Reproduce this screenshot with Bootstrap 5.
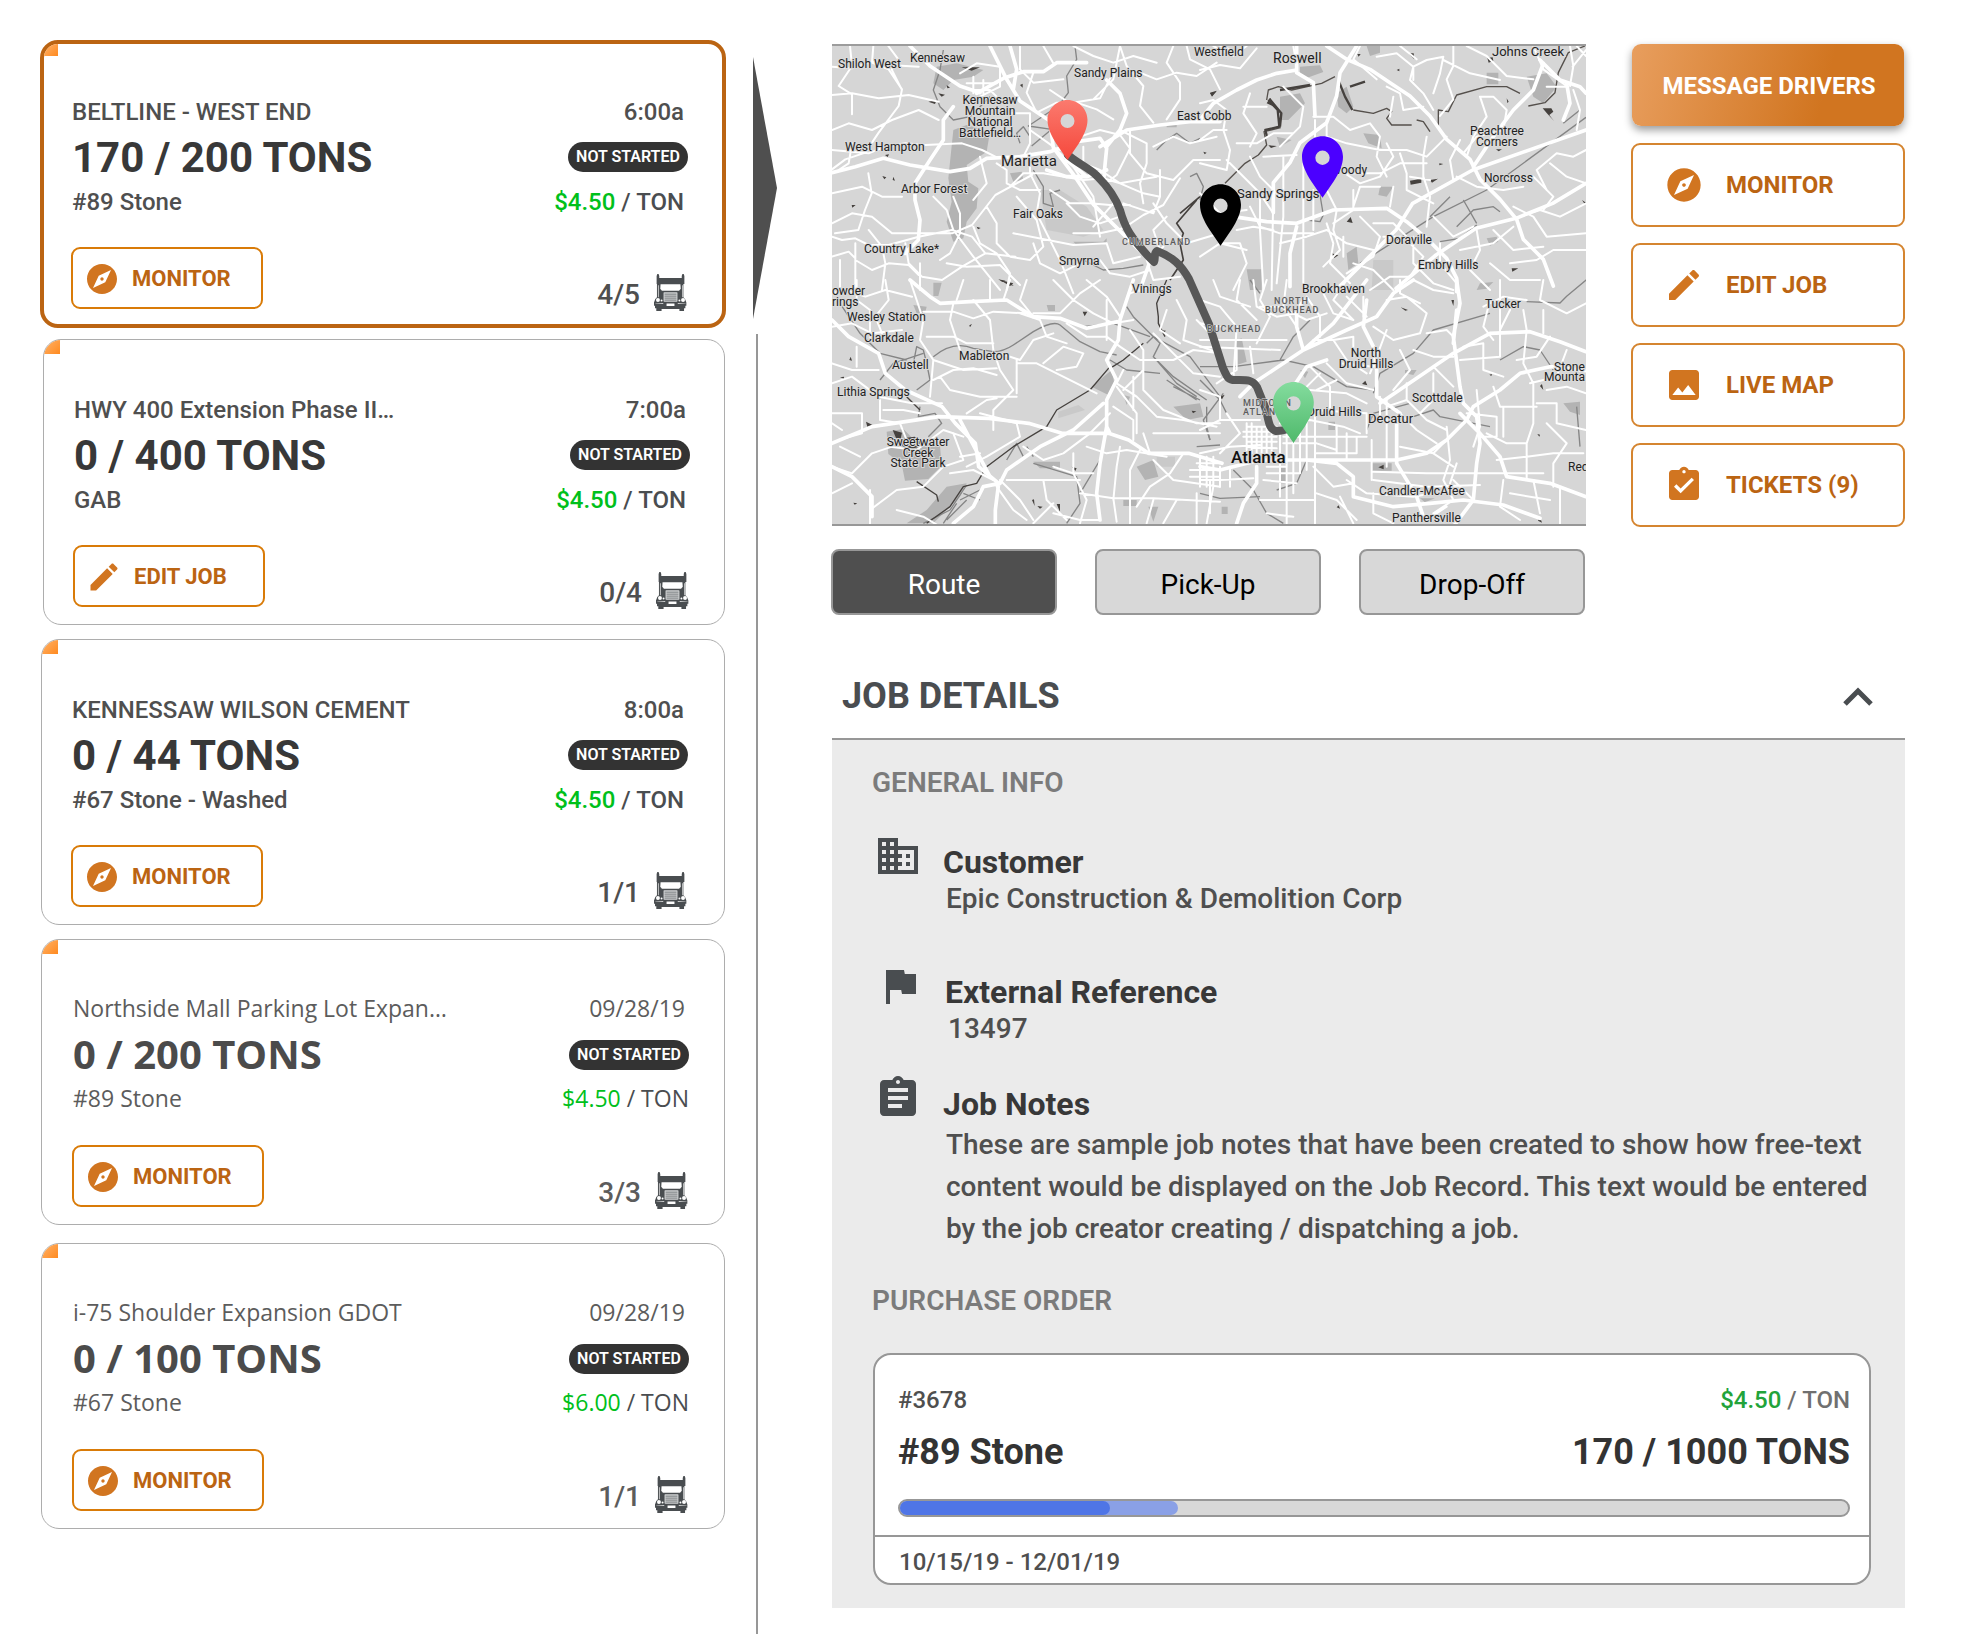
<!DOCTYPE html>
<html lang="en">
<head>
<meta charset="utf-8">
<meta name="viewport" content="width=device-width, initial-scale=1">
<title>Dispatch jobs</title>
<link href="https://cdn.jsdelivr.net/npm/bootstrap@5.3.0/dist/css/bootstrap.min.css" rel="stylesheet">
<style>
  body { font-family: Roboto, "Liberation Sans", sans-serif; font-weight: 500; color: #4f4f4f; background: #fff; }
  .page { min-height: 100vh; padding: 40px 83px 0 41px; }
  .jobs { flex: 684 1 0; min-width: 0; }
  .rail { width: 24px; margin: 17px 55px 0 28px; }
  .rail-arrow { width: 24px; height: 262px; background: #4f4f4f; clip-path: polygon(0 0, 100% 50%, 0 100%); }
  .rail-line { width: 2px; margin: 15px 0 0 3px; background: #979797; }
  .main { flex: 1073 1 0; min-width: 0; padding-top: 4px; }

  .job { position: relative; overflow: hidden; border: 1px solid #adadad; border-radius: 18px; padding: 53px 36px 10px 29px; margin-bottom: 14px; font-size: 24px; line-height: 34px; }
  .job.selected { border: 4px solid #bb6412; margin: 0 -1px 11px; padding: 51px 34px 8px 27px; }
  .job.inset { margin-left: 2px; padding-right: 34px; }
  .job.later { font-family: "Open Sans", "Noto Sans", sans-serif; font-size: 23px; color: #5c5c5c; padding: 51px 35px 10px 30px; }
  .job.later + .job.later { margin-top: 18px; }
  .job::before { content: ""; position: absolute; left: 0; top: 0; width: 16px; height: 14px; background: linear-gradient(135deg, #ffb36b, #ff8a1f); }
  .job.selected::before { width: 14px; height: 12px; }
  .job .line { padding-left: 1px; }
  .tons { font-size: 42px; line-height: 54px; padding-top: 2px; font-weight: 700; color: #383838; }
  .later .tons { font-size: 40px; color: #4b4b4b; }
  .later .state { margin-top: 4px; }
  .foot { margin-top: 28px; }
  .later .foot { margin-top: 30px; }
  .state { font-family: Roboto, sans-serif; font-size: 16px; line-height: 30px; font-weight: 600; width: 120px; text-align: center; border-radius: 15px; background: #333; color: #fff; }
  .money { color: #00c01b; }
  .unit { color: #4a4d50; }
  .act { height: 62px; width: 192px; padding: 1px 0 0 11px; gap: 12px; border: 2px solid #d97b08; border-radius: 9px; background: #fff; color: #bb6412; font-family: Roboto, sans-serif; font-size: 22px; font-weight: 700; }
  .act svg { width: 36px; height: 36px; fill: #d17520; }
  .crew { margin-top: 27px; gap: 13px; font-family: Roboto, sans-serif; font-size: 28px; line-height: 42px; }
  .crew svg { width: 35px; height: 37px; }

  .mapcol { flex: 754 1 0; min-width: 0; }
  .map { display: block; width: 100%; height: auto; border-top: 2px solid #9c9c9c; border-bottom: 2px solid #979797; }
  .side { flex: 274 1 0; margin-left: 45px; gap: 16px; }
  .side button { height: 84px; border: 2px solid #d58530; border-radius: 9px; background: #fff; color: #bb6412; font-size: 24px; font-weight: 700; padding: 0 0 0 31px; gap: 22px; }
  .side svg { width: 40px; height: 40px; fill: #d17520; }
  .side .send { height: 82px; margin: 0 1px 1px; border: 0; padding: 2px 0 0 2px; color: #fff; background: linear-gradient(105deg, #e89e5e, #d17520 70%); box-shadow: 0 4px 8px rgba(0,0,0,.4); }
  .views { margin: 23px 1px 0 -1px; gap: 38px; }
  .views button { flex: 1 1 0; height: 66px; border: 2px solid #979797; border-radius: 8px; background: #d8d8d8; color: #000; font-size: 28px; padding: 6px 0 0; }
  .views .on { background: #4f4f4f; color: #fff; }

  .sect { margin-top: 59px; padding: 0 31px 20px 10px; border-bottom: 2px solid #979797; }
  .sect h1 { font-size: 36px; line-height: 44px; font-weight: 700; color: #4a4d50; margin: 0; }
  .sect button { border: 0; background: none; padding: 2px 0 0; }
  .sect svg { display: block; width: 32px; height: 20px; }
  .panel { background: #ebebeb; padding: 25px 34px 23px 40px; }
  .panel h2 { font-size: 28px; line-height: 36px; font-weight: 600; color: #7b7b7b; margin: 0 0 31px; }
  .info { gap: 21px; padding-left: 2px; margin-bottom: 46px; }
  .info.tight { margin-bottom: 28px; padding-left: 4px; }
  .info.notes { margin-bottom: 33px; margin-right: -10px; }
  .info > svg { width: 48px; height: 48px; flex: none; fill: #494d50; }
  .info h3 { font-size: 32px; line-height: 40px; font-weight: 700; color: #383838; margin: 10px 0 0; }
  .info p { font-size: 28px; line-height: 34px; margin: 0; padding-left: 3px; }
  .info.notes p { line-height: 42px; }
  .po { border: 2px solid #979797; border-radius: 18px; background: #fff; margin: 34px 0 0 1px; font-size: 24px; line-height: 32px; }
  .po-top { padding: 29px 19px 18px 23px; }
  .po-name { font-size: 36px; line-height: 48px; margin-top: 12px; font-weight: 700; color: #333; }
  .bar { position: relative; height: 18px; margin-top: 23px; border: 2px solid #979797; border-radius: 9px; background: #d8d8d8; overflow: hidden; }
  .bar div { position: absolute; left: 0; top: 0; height: 100%; border-radius: 0 8px 8px 0; background: #8aa0e6; }
  .bar .done { background: #4f75e6; }
  .po-dates { border-top: 2px solid #979797; padding: 9px 24px 5px; }
  .po .money { color: #22a33a; }
  .po .unit { color: #707070; }
</style>
</head>
<body>
<!-- Shared icon shapes -->
<svg width="0" height="0" class="position-absolute" aria-hidden="true">
  <symbol id="i-compass" viewBox="0 0 24 24"><path d="M12 10.9c-.61 0-1.1.49-1.1 1.1s.49 1.1 1.1 1.1c.61 0 1.1-.49 1.1-1.1s-.49-1.1-1.1-1.1zM12 2C6.48 2 2 6.48 2 12s4.48 10 10 10 10-4.48 10-10S17.52 2 12 2zm2.19 12.19L6 18l3.81-8.19L18 6l-3.81 8.19z"/></symbol>
  <symbol id="i-edit" viewBox="0 0 24 24"><path d="M3 17.25V21h3.75L17.81 9.94l-3.75-3.75L3 17.25zM20.71 7.04c.39-.39.39-1.02 0-1.41l-2.34-2.34c-.39-.39-1.02-.39-1.41 0l-1.83 1.83 3.75 3.75 1.83-1.83z"/></symbol>
  <symbol id="i-image" viewBox="0 0 24 24"><path d="M21 19V5c0-1.100-.9-2-2-2H5c-1.100 0-2 .9-2 2v14c0 1.100.9 2 2 2h14c1.100 0 2-.9 2-2zM8.500 13.500l2.500 3.010L14.500 12l4.500 6H5l3.500-4.500z"/></symbol>
  <symbol id="i-task" viewBox="0 0 24 24"><path d="M19 3h-4.180C14.400 1.840 13.300 1 12 1c-1.300 0-2.400.84-2.820 2H5c-1.100 0-2 .9-2 2v14c0 1.100.9 2 2 2h14c1.100 0 2-.9 2-2V5c0-1.100-.9-2-2-2zm-7 0c.55 0 1 .45 1 1s-.45 1-1 1-1-.45-1-1 .45-1 1-1zm-2 14l-4-4 1.410-1.410L10 14.170l6.590-6.590L18 9l-8 8z"/></symbol>
  <symbol id="i-truck" viewBox="0 0 100 112">
    <path fill="#494d50" d="M8 6l2-6h4l2 6v6h68V6l2-6h4l2 6v24h-3v40l5 6 4 10v10h-3v8h-4v8H77v-6H23v6H7v-8H3v-8H0V86l4-10 5-6V30H8z"/>
    <path fill="#fff" d="M20 31h60l1 14-5 6H24l-5-6z"/>
    <path fill="#fff" d="M12 34h2v36h-2zM86 34h2v36h-2z"/>
    <rect x="29" y="55" width="42" height="29" rx="2" fill="#d3d5d6"/>
    <path stroke="#494d50" stroke-width="2" d="M32 61h36M32 67h36M32 73h36M32 79h36"/>
    <circle cx="12" cy="79" r="6" fill="#fff"/><circle cx="88" cy="79" r="6" fill="#fff"/>
    <circle cx="23" cy="80" r="3" fill="#fff"/><circle cx="77" cy="80" r="3" fill="#fff"/>
    <path fill="#fff" d="M38 89h24v8H38zM4 89l24-1v2H4zM72 88l24 1v1H72z"/>
  </symbol>
  <symbol id="i-pin" viewBox="0 0 40 60"><path fill-rule="evenodd" d="M20 0C9 0 0 9 0 20c0 8 4 16 9 24l11 16 11-16c5-8 9-16 9-24C40 9 31 0 20 0zm0 14a7 7 0 1 1 0 14a7 7 0 1 1 0-14z"/></symbol>
</svg>

<div class="page d-flex">
  <section class="jobs" aria-label="Jobs">
    <article class="job selected">
      <div class="line d-flex justify-content-between"><span>BELTLINE - WEST END</span><span class="pe-1">6:00a</span></div>
      <div class="line d-flex justify-content-between align-items-center"><span class="tons">170 / 200 TONS</span><span class="state">NOT STARTED</span></div>
      <div class="line d-flex justify-content-between"><span>#89 Stone</span><span class="unit pe-1"><span class="money">$4.50</span> / TON</span></div>
      <div class="foot d-flex justify-content-between align-items-start">
        <button type="button" class="act d-flex align-items-center"><svg><use href="#i-compass"/></svg>MONITOR</button>
        <div class="crew d-flex">4/5 <svg><use href="#i-truck"/></svg></div>
      </div>
    </article>
    <article class="job inset">
      <div class="line d-flex justify-content-between"><span>HWY 400 Extension Phase II…</span><span class="pe-1">7:00a</span></div>
      <div class="line d-flex justify-content-between align-items-center"><span class="tons">0 / 400 TONS</span><span class="state">NOT STARTED</span></div>
      <div class="line d-flex justify-content-between"><span>GAB</span><span class="unit pe-1"><span class="money">$4.50</span> / TON</span></div>
      <div class="foot d-flex justify-content-between align-items-start">
        <button type="button" class="act d-flex align-items-center"><svg><use href="#i-edit"/></svg>EDIT JOB</button>
        <div class="crew d-flex">0/4 <svg><use href="#i-truck"/></svg></div>
      </div>
    </article>
    <article class="job">
      <div class="line d-flex justify-content-between"><span>KENNESSAW WILSON CEMENT</span><span class="pe-1">8:00a</span></div>
      <div class="line d-flex justify-content-between align-items-center"><span class="tons">0 / 44 TONS</span><span class="state">NOT STARTED</span></div>
      <div class="line d-flex justify-content-between"><span>#67 Stone - Washed</span><span class="unit pe-1"><span class="money">$4.50</span> / TON</span></div>
      <div class="foot d-flex justify-content-between align-items-start">
        <button type="button" class="act d-flex align-items-center"><svg><use href="#i-compass"/></svg>MONITOR</button>
        <div class="crew d-flex">1/1 <svg><use href="#i-truck"/></svg></div>
      </div>
    </article>
    <article class="job later">
      <div class="line d-flex justify-content-between"><span>Northside Mall Parking Lot Expan…</span><span class="pe-1">09/28/19</span></div>
      <div class="line d-flex justify-content-between align-items-center"><span class="tons">0 / 200 TONS</span><span class="state">NOT STARTED</span></div>
      <div class="line d-flex justify-content-between"><span>#89 Stone</span><span class="unit"><span class="money">$4.50</span> / TON</span></div>
      <div class="foot d-flex justify-content-between align-items-start">
        <button type="button" class="act d-flex align-items-center"><svg><use href="#i-compass"/></svg>MONITOR</button>
        <div class="crew d-flex">3/3 <svg><use href="#i-truck"/></svg></div>
      </div>
    </article>
    <article class="job later">
      <div class="line d-flex justify-content-between"><span>i-75 Shoulder Expansion GDOT</span><span class="pe-1">09/28/19</span></div>
      <div class="line d-flex justify-content-between align-items-center"><span class="tons">0 / 100 TONS</span><span class="state">NOT STARTED</span></div>
      <div class="line d-flex justify-content-between"><span>#67 Stone</span><span class="unit"><span class="money">$6.00</span> / TON</span></div>
      <div class="foot d-flex justify-content-between align-items-start">
        <button type="button" class="act d-flex align-items-center"><svg><use href="#i-compass"/></svg>MONITOR</button>
        <div class="crew d-flex">1/1 <svg><use href="#i-truck"/></svg></div>
      </div>
    </article>
  </section>

  <div class="rail d-flex flex-column flex-shrink-0"><div class="rail-arrow"></div><div class="rail-line flex-grow-1"></div></div>

  <main class="main">
    <div class="d-flex align-items-start">
      <div class="mapcol">
        <svg class="map" viewBox="0 2 754 478" role="img" aria-label="Route map from Marietta to Atlanta">
          <defs>
            <linearGradient id="gRed" x1="0" y1="0" x2="0" y2="1"><stop offset="0" stop-color="#fb7a6e"/><stop offset="1" stop-color="#f5483c"/></linearGradient>
            <linearGradient id="gGreen" x1="0" y1="0" x2="0" y2="1"><stop offset="0" stop-color="#84dc9e"/><stop offset="1" stop-color="#4fb96b"/></linearGradient>
          </defs>
          <rect width="754" height="482" fill="#d6d6d6"/>

          <!-- Parks and built-up areas -->
          <g fill="#b3b3b3">
            <path transform="translate(-12 -14) scale(.33333)" d="M400 300l40-15 70 20-10 60-60 40 5 50 30 20-5 60-30 40-10 50-30 10-20-60 15-60-10-70zM570 430l35-5 5 25-30 5zM350 110l60-10 80 20-30 20-60 10-30 30-30-20zM760 635h90l10-10v15l-90 5zM1040 280h30v12h-30z"/>
            <path transform="translate(368 -14) scale(.33333)" d="M300 110l60-4 10 20-50 18-20-14zM240 200l60-10 15 30-50 50-25 0zM410 190l30-20 20 60-20 20-25-20zM860 128h35v35h-35zM980 140l60-10 30 40-40 50-30-20zM490 310l50 5 5 40-40-15zM540 470l40 0-20 30-25-5zM860 625l30-5 5 15-25 12zM440 670l30-20 5 50-30 20zM140 718h45v62h-35zM230 320l45 10-35 20zM500 48h40v20l-30 10z"/>
            <path transform="translate(-12 236) scale(.33333)" d="M200 455l50-8 30 30 80 20 5 60-40 40-70 5-10-50-40-30zM340 8h25l-10 40-15 0zM280 75l40 5-5 20-25 0zM380 620l60-10-20 40-80 80h-80l60-40zM815 320l60-50 10 50-20 25zM1060 380l80-10 10 40-50 10zM640 545h80v20h-60zM950 560l50-20 15 50-40 10zM910 660h40v18h-40zM985 680l30 0-15 45zM910 345l20 5-10 25zM680 75h25v18h-20z"/>
            <path transform="translate(368 236) scale(.33333)" d="M1090 370l50-5v40l-30-10zM515 550h60v22h-60zM240 560h22v50h-20zM385 425h20v25h-20zM615 270l35 0-10 15-25-5zM65 680h18v22h-18zM110 180l15-5 15 70-30 10zM840 10l40-4-20 20-30 4zM300 270l25 5-10 20zM660 655l45 0-30 12z"/>
          </g>
          <g fill="#c9c9c9">
            <path transform="translate(-12 -14) scale(.33333)" d="M660 480h60l80 50 50 70-60 20-110-20z"/>
            <path transform="translate(368 -14) scale(.33333)" d="M520 690h60v90h-65z"/>
            <path transform="translate(-12 236) scale(.33333)" d="M1010 530h55v30h-55zM715 395l60-20 20 15-80 25z"/>
          </g>

          <!-- Rivers and railways -->
          <g fill="none" stroke="#858585" stroke-width="4" stroke-linejoin="round">
            <path transform="translate(-12 -14) scale(.33333)" d="M370 60l-10 60-20 60 20 50 40 40 50-10 60-60M765 48l5 40-30 50 5 50-30 40-90 60 70 10-60 50M600 340l-10-30 20-20 20 30M640 420l30 50 0 50 30 10-10-40 30-10M790 690l60 30 60-5 60-10M1110 440l20-10 20 40-10 40M1010 360l30-30 30-20 40 30 30-15"/>
            <path transform="translate(368 -14) scale(.33333)" stroke="#55504c" d="M75 460l60-60 40-25 25-30-8-40 50-12M200 210l5-30 30-10 40 10 90-20 40-20M460 240l60 10 40-15 15 10-15 20 15 20 60 0M650 270l20 5 20 30M715 290l0-50 30 5 25-50 90-25 60 0 40 20M985 228l50-10 30-30 10-60 30-60 50-20"/>
            <path transform="translate(368 -14) scale(.33333)" d="M1158 262L860 480 700 560 480 700M790 510l40 70M770 590l50-50 60-10 20 15M720 635l60-10 50-40M690 560l60-60M320 570l40 5 10-20-10-60M1090 280l50-40"/>
            <path transform="translate(-12 236) scale(.33333)" d="M60 70l60 90 60 60 80 20M340 230q60-50 120-25l60 10q30 0 60-20l60-40q60-35 80-20l60 50 60 30 50 10M180 300l40-50 90-30M310 730l80-40 50-75M280 250l10-50 20 10 10 40 10 50-40 30M300 380l-5 30 50-10 20 30-40 40M790 140l90-10 110 40M920 80l20 30 60 60 110 60 60 80 30 40M980 190l20-20 20 20-20 40 60 60 100 70M1000 230l70 80 60 40M1040 300l90 60M1060 320l80 40M740 730l40-60-10-80-130-40M840 540l-60 100M620 500l20 30M560 540l30-50 20 40M430 640l50 20M420 660l60-30M370 730l40-60M380 720l60-60M1160 380l0 60 10 40M1130 500l70-5M870 240l50 30 100 10"/>
            <path transform="translate(368 236) scale(.33333)" d="M0 260l100 0 150-20 90 20 100 60 80 10M520 340l20-60 100-60 60-70 170-50M240 240l40-70 50-50M30 480l-20-60 60-80M100 570l60 60 40 70 50 30M320 540l-30 70-60 20M500 450l20-50 110-30M640 410l60-20 20 20 150 30M980 65l100 4 20-20 60-50M0 300l60 60 20 40M150 0l30 40M900 240l70-40 50 10 40 60M1140 500l-10-120M0 640l60 15 120-5"/>
          </g>
          <g fill="none" stroke="#45413e" stroke-width="7" stroke-linejoin="round">
            <path transform="translate(368 -14) scale(.33333)" d="M205 210l28 30 5 50-42 10 5 20M208 206l36 44-4 40M240 180l90-15M415 150l20 50 22 40M450 170l45-15"/>
            <path transform="translate(-12 -14) scale(.33333)" stroke-width="5" d="M1080 550l60-50M1130 510l-60 70 20 30-10 30 10 50-40 60"/>
            <path transform="translate(-12 236) scale(.33333)" stroke-width="4" d="M1040 0l-30 70 5 40 0 20 20 40M970 190l-60 50-40 25M870 260l-60 70-100 60-30 50-100 60-80 60-30 50-40 10-40 60-70 50M290 605l60 40 5 20M260 350l40 40"/>
          </g>
          <g fill="#45413e">
            <path transform="translate(-12 -14) scale(.33333)" d="M425 112l55 0-25 10zM355 190l20 4-10 6zM325 215l25-5-5 12zM380 165l10 8-8 2zM600 165l8-4v12zM195 375l12-2-4 8zM187 438l12 4-6 6zM218 450l2-10 5 12zM95 525l12 0-10 8zM1170 190l20-6-14 14zM1150 365l10 3-6 5zM535 748l22 4-10 4zM566 755l15 12-12-2zM470 590l12 4-8 4z"/>
            <path transform="translate(368 -14) scale(.33333)" d="M30 188l20-6-14 18zM200 220l10-16 16 28zM625 70l16 0 2 18zM862 84l16-2 2 10-14 6zM1028 235l26 0 6 10-12 10 14 18-20-22zM630 452l34-6 0 12-32 6zM690 450l24-4-18 12zM440 575l12-14 6 18zM395 670l20 6-12 8zM888 358h18l-10 6zM935 715l20 0-18 10zM590 120l8-4v8zM718 400l12 2-12 4zM472 72l10 0-6 8zM205 346l26 2-18 6zM920 205l6 10-4 4zM1146 510l12 8-4 4z"/>
            <path transform="translate(-12 236) scale(.33333)" d="M138 425l20 10-16 6zM218 450l28 8-4 18-14-2zM240 490l14-16 30-4 20 14-12 18-30 8zM88 240l4-10 4 12zM60 292l12-2v6zM788 95l14 0-8 14zM636 660l6-2 2 20zM710 672l10 0 0 24zM755 560l15 5-4 8zM448 136l8-4-6 10zM100 668l12 2-8 4zM652 678l16 2-8 6zM1020 150l18 2-8 8zM540 0l40 10-10 8zM1115 392l14 2-10 6z"/>
            <path transform="translate(368 236) scale(.33333)" d="M602 82l22 8-8 2zM754 60l8 0-2 18zM486 312l10-10 6 14zM1020 318l6-6 4 18zM535 562l16-8 0 14zM1014 722l6-10 6 16zM868 284l8-2-2 6zM410 682l6-6 4 10zM1012 462l8 2-2 6zM60 350l14-6-8 14z"/>
          </g>

          <!-- Local roads -->
          <g fill="none" stroke="#fff" stroke-width="6" stroke-linejoin="round" stroke-linecap="round">
            <path transform="translate(-12 -14) scale(.33333)" d="M36 110l60 5 60-20 50 10 90 5M90 48l6 60-40 60 40 25 0 60M36 195l60-5 80 15 90-10 90 20M160 48l-4 50 50 20 40 60-10 50-60 80-40 60-60 20-40 30M205 48l30 40-20 30 30 60M36 300l50-20 70 20 60-30 80-30 60 30M36 360l110 10 50-20 60-10 60 5 110-5 60 20 40 20M96 340l-10 60-30 20M145 430l10 60-20 50-20 60-70 10M36 580l60-30 60 10 60 50 80 0 100 0 60-25 70-90 110-60M36 620l30 10 40-5 40 20 60 0 90-25 100-20 60 20 40 50M36 680l50-15 20 20 0 95M146 600l40 50 10 50-10 80M60 690l0 90M106 640l0 50 50 30 50-20 60 5 30 30M256 640l10 60 40 40 60 10 60-40 70-40 90 10M400 500l20 50 0 60-30 60-30 20M340 500l40 40 20 60 60 80 80 100M460 590l20 50 50 30 40 60-10 50M500 530l30 50 0 60 40 40 60 10 40-40-20-80-60-70M530 400l30 20 0 40 40 20 60 0M570 470l40-40 60 0 120 20 60-5 50 15 110-20M600 400l30-60 0-90-60 0M630 300l70 50 60 60 60 90 20 120M630 370l0 60 30 60-10 60 30 60 40 80 40 100M690 480l60 40 60 0 60 5 60 0M740 520l40 40 60 20 60-20M760 610l80 0 70-15 60-40 60-30 50-80M580 610l180 35 100-5M640 640l20 60 60 30 60-30M860 640l20 60 80-20M840 690l30 40 60 10 60-20M720 360l60-40 60-20 60 15 30 40-40 80-40 30M790 350l0 50 50 20 60 40 70 30 50 10M900 300l80 40 0 60-20 60 10 60M930 300l0 70 50 60 80 20 60-60 80 0M900 48l20 60 50 60-10 60 40 50M960 128l50 20 60-20 60 10 60-40M1060 48l-20 50 40 60 0 50-40 60M1100 48l10 40 60 30 30 60M820 208l60-60 20-100M760 48l60 30 60 20 60-20 70 20M600 48l0 70 40 40 90-10M700 100l-30-52M640 128l-20 60 30 60 60-30 60 0 60 20 50 30M690 180l60 40 90-15 30-60M420 130l50-30 70 10 0 60-60 30M440 160h90M460 140v50M490 150v40M450 180h60l20 20M1000 350l60-30 50 20 80-20M1040 560l-40 40 20 60 50 30M1000 520l40 60 60 60 100-30M1030 650l-50 40 20 60 80-10M380 700l60 10 100-5 60 60M300 700l0 80M36 490l90-20 60 30 60 0M480 380l20 80-40 50M880 520l-60 70M910 520l90 30 20-50 0-80"/>
            <path transform="translate(368 -14) scale(.33333)" d="M0 120l60-15 60 10 50-60M40 48l60 30 40-30M0 220l40-10 40 30-10 60 20 60-10 60-80-20M80 300l-40 0-40 30M80 390l40 40 60 60 40 60M150 380l30 60 60 60M190 380l100-5M110 340l60 0 50-30 60 0M130 230l70 0M150 190l-20 60 40 60-20 40M250 170l60 60-10 60-60 60M340 260l60 0 50 40 60-20 30 40-10 60 30 60M380 320l60 20 100 20 80 0 60 20 60-60M345 270l0 50M380 270l0 60M480 48l-20 40 70 60M530 80l60-10 50 40 0 40M640 110l-10 40 40 40 30 50M640 110l40-20 50-10-10 50-20 60M600 48l50 40M760 48l0 60-20 40 20 60-40 50M800 48l60 30 60 60 80 10M730 90l80 40 90 20M840 200l40 0 40 40-10 60-80 20-40 50M840 200l20 60-40 60-20 60M680 320l-10 60 0 60 20 60-10 90M600 370l20 60 0 50 80 40M560 340l20 40-40 60-60 20-60-40M430 430l110 0 60-30 80 0M540 470l-60 0-20 60M580 470l-10 60M460 480l0 60-60 40M380 480l30 60-10 60 20 60-50 50M250 380l0 180-20 200M310 400l0 380M340 480l0 120M180 500l0 100 10 180M220 480l-5 300M150 530l30 60 60 20 100 0M110 600l50-10 60 10M60 640l60 0 20 60-40 80M0 680l60-40 80 20M240 640l80-20 60-20 60 40 80 20M380 580l20 60-10 60 60 60M430 620l0 60M480 560l60 60-20 60-80 50M520 580l60 0 40 40M550 620l60 0 60 60-40 60-60 0-60 40M460 700l60 20 60 60M640 620l0 80 60 60 60 20M700 560l60 60 60-30M720 640l0 60 50 60M830 600l10 60-30 60 60 60M780 660l100-20 60-50M880 600l60 60 90-10M960 560l60-20 60 20 78-40M940 530l60 30 40 60 118-10M930 700l80-10 50-30 98 0M870 700l60 50 90 0M1000 48l30 70 70 50M1040 170l60 0M1110 48l10 60-10 60M1158 60l-40 50M1040 480l-30-60 60-50 50 10 38-20M1050 400l50 40 58 20M1000 440l60 60-30 40M1130 48l28 30M1120 180l20 60-10 60M760 450l-10-60 30-60M770 440l60 30 80 10 60-10M0 490l60 60 80-10M280 48l10 60M60 48l30 10M630 440l60 10M560 170l40 20 10 50 60-10M580 200l-10 60"/>
            <path transform="translate(-12 236) scale(.33333)" d="M36 40l40-10 60 20 60-20 80 20M110 0l0 60 40 30 0 80M196 0l10 60-40 50 20 50M36 140l60-10 60 30 90-10M36 250l60 20 80 0M110 260l0-60M36 310l60-20 80 60 100 20 90 0M36 400l90 0 0 60-70 20M180 360l0 60 60 10 20 50M270 0l20 60 20 60-10 60 40 60M310 95l90 0 60 20 60-20 100 5M400 70l-10 50 20 60 20 60M430 0l-20 60M460 60l50 60 10 90 20 60 40 60-60 60 0 60M510 0l0 60M570 0l-20 60M340 240l90 30 100-5M340 300l60-30 60-5 70 20M340 240l-10 110M360 290l30 40 90 20 110 0M440 400l60-40 30-5M320 170l80 0 40 20 80 0M540 220l60 20 40-60 60-20M590 240l0 100M590 250l60 0 60 30 60 30 60 30M670 250l60-50 60 20-20 40-60 10M600 100l60 20 20 50 60 20M640 100l80 0 60-60 60-40M620 0l-20 60 40 50M700 0l60 60 60 40M800 0l60 50 40 60M740 130l60 40 60 0 40 30M820 100l60 30 60-10M860 60l0 120M930 150l40 60 0 60-60 60M900 200l60 40 100 0 60-30 80 10M1000 160l60 60 60 60 80 10M1070 60l30 60-10 60 110 40M1040 90l-20 60 60 40M1130 120l60 60M930 40l60-20 60 10M910 270l-20 40 60 40 60 60 80 10 100 20M940 290l0 100M970 270l0 60 60 60 100 40 70 0M890 320l60 80 0 60M880 380l60 40 0 60M1000 460l200 0M970 460l20 60M870 400l-60 60-80 60-60 20-60-40M510 410l80 20 10 40-100 60-60 30M420 530l60-10M480 400l40 10 80 20M190 390l60 0 50 10M210 500l80 10 80-60 60 20M36 560l60 20 60-60 60-20M60 500l60 30M36 640l60-30M150 630l0 100M150 690l80-60 80-10 60-60 60-20-30-80M390 580l70-10 60 30M230 690l80 20 50 30M540 600l60 60 40 60M560 600l100 0 120 0M670 600l10 60 60 60M530 620l50 70 40 30M700 560l60 20 60 0M780 640l100 15 120 0 200 10M760 520l0 60 40 80-20 70M800 500l60 20 60-10 120 20M900 500l-10 60-10 100M960 510l-30 60 0 160M1000 540l60 60 140 20M1090 520l-40 60-60 40-40 60M1130 550l70 0M1140 530l0 90M1160 530l0 90M1180 530l0 90M1110 570l90 0M1110 590l90 0M880 655l10 70M1000 660l-20 70M1070 660l-40 70M1130 640l0 90M1180 620l-20 110M700 700l80 20 60 0M640 730l60-60M36 430l30 20"/>
            <path transform="translate(368 236) scale(.33333)" d="M0 60l60 20 50 60-10 160M40 0l20 50 90 30M120 0l-10 60 60 60M160 0l10 80 60 30 60-10M200 0l-20 60 30 50-40 80M0 180l260 0M0 200l240 10M0 130l60 10M110 210l0 60-60 40M180 80l60 0 80 40 60-20M150 200l10 80M260 0l-10 80 40 60M320 50l40 60 0 60M370 40l30 60 60 20M340 180l60 0 60-10 0 60M400 180l40 60 60 40M440 0l-40 60 60 60M490 50l0 60M440 50l60 60M560 60l60-10 60 50-20 60-80 20-60-40M600 0l0 40 60 30M640 0l60 30 60 10M560 150l-30 80-20 50M380 250l60 60 80 20M330 260l60 60 0 80M360 280l-60 60M350 330l60-30M420 250l100 10M330 330l110 10 60 30M340 390l160 10 0 60M345 400l0 330M0 330l60 20 0 70-60 30M60 420l120 0M80 400l40 60-60 60M0 520l90-20 90-5M0 600l60 0 100-5M60 560l0 60M90 560l0 60M30 600l0 100M140 440l90 0M130 455l100 0M130 470l100 0M140 485l90 0M140 500l90 5M140 430l0 80M155 430l0 90M170 440l0 80M185 440l0 80M200 440l0 80M215 440l0 90M240 450l0 200M260 430l0 300M280 440l0 200M300 430l0 150M320 420l0 150M250 470l250 0M250 490l100 0 60 20M240 430l90-10 100 20 50 20M200 560l60 0M200 580l100 0M190 600l100 10M180 660l160 0M200 700l80 10M340 560l60 60 60-10M350 520l120 0 0-50M410 440l0 80M440 460l0 80M515 480l0 120M520 600l160 20 160-5M520 575l160 5 350 0M540 350l0 60M560 360l0 200M620 310l0 50 60 60 60 30M560 380l60-20M590 390l60 60 60 40M600 500l100 20 60-60M640 210l60 20 60 0M600 210l30 60-50 60M700 280l0 80-40 40M700 260l60 60M680 160l60-10 20 20M790 200l60-10 0 80 60 20M780 240l120-10 0-80M900 0l0 160M930 90l-30 60M970 90l10 60-10 100 30 60M850 80l60-30 70 10M870 60l-20 80 30 40M1030 90l0 70M1030 0l-10 60 80 40 58-30M1050 170l-40 60-60 10M1100 210l-30 80-80 20M830 330l10 110-20 60M800 400l90 10 0 60-50 0M880 320l20 60 110 0M910 380l0 90M1000 310l0 120-20 60 0 110M1040 330l60-10 58 20M1010 370l60 0 0 60 88 20M1040 430l60 60-40 60 0 70M980 530l80-10 90 0M890 540l90-10M910 600l-10 80 60 40M860 460l60 30 60 0M740 440l10 100-20 60 30 60-60 40M700 520l60 40M440 600l60 40 140 10 60-10M520 640l0 60 60 30M420 650l40 80M350 640l60 20 60 60M600 720l80 0 60-40M760 600l60 60M770 550l-20 60M1080 620l0 110M1000 600l20 100M930 640l120 20"/>
          </g>

          <!-- Highways -->
          <g fill="none" stroke="#fff" stroke-width="11" stroke-linejoin="round" stroke-linecap="round">
            <path transform="translate(-12 -14) scale(.33333)" d="M510 48l50 100 40 65 90 60 10 80 60 80 60 90 80 80 90 90-30 87M36 428l70-18 84-25 80 20 120 20 60-10 50-30 100-5 90-15 80-30 70-10 20 30-5 50-5 60M570 48l20 70-10 60M270 48l60 60 90 60 60 20M400 230l-30 40 0 60-40 60-45 70 0 50 15 60-5 60-40 40M470 190l80-45 60-20 60 0 40-27 90 0M760 330l-20 60 60 50 60-20M840 350l80-50 100-15 90-10 90 0M860 150l40 40 20 60-20 50-40 50M680 420l60 20 60 0"/>
            <path transform="translate(368 -14) scale(.33333)" d="M470 48l-50 80-10 70-30 80-80 60-30 60-50 60 0 90M0 270l40-50 70-40 60-30 60-20 60-10M290 48l0 80 50 30 5 100M380 48l60 40 70 30 60 40 60 40 60 60 50 70 70 60 30 60 60 60 50 60 20 60 60 60 30 80M1158 300l-340 120-180 100-50 80-180 180M1158 460l-100 60-110 45-120 30-120 80-120 100M100 560l100 15 90 5 110-40 160-5 60 40 60 50 60 60 30 60 0 40M1030 100l-30 80-60 60-60 80-60 90M1020 90l60 60 60 20 18 20M1100 160l10 60-20 50M290 590l-20 80 0 100"/>
            <path transform="translate(-12 236) scale(.33333)" d="M270 0l60 50 30 20 90-5 110-5 80 50 80 5 80 30 90-20M36 120l50 50 90 50 20 60 60 50 110 50 40 50 60 60 10 70 60 50-10 80 0 90M36 490l120-50 200-30 150 5 120 15 100 30 140 0 60 20 60 40 120 0 100 30M940 0l-40 120-5 60-35 60 30 60-30 60 0 80-20 110-10 90 10 80M400 730l60-50 30-60 50-10 20-40 100-70 100-50 90-80M36 560l60 30 60 60 0 60M860 440l10 20M420 420l90 170"/>
            <path transform="translate(368 236) scale(.33333)" d="M640 0l-60 40-50 70-90 40-130 60-90 60-60 40-40 40M500 0l-100 130-90 80M500 60l-10 80 30 60 10 70 0 80 70 50M310 210l-20-70 0-40 20-40M0 560l60 10 120-30 90 0 320 0 90-20 60-40 60-60 20-40 80-50 60-50 90-20 178 20M770 0l10 70-20 100 20 150 10 50 40 40 10 80-10 60-10 110-60 80M780 400l60 60 60 70 20 60 130 20 108 40M320 540l90 10 50 40 0 60 120 30 110-10 100-10 120 15 110 40M280 320l40-60 60-20M540 370l220-150 110-60 120-5 90 30 78 30M590 410l0 140 60 100 20 60M170 560l0 50-40 60-20 60M760 190l10-100"/>
          </g>

          <!-- Planned route -->
          <path d="M236 111c10 9 22 13 30 22 11 11 18 22 22 33 6 22 14 30 27 45l7 7c2-4-1-8 3-11 16 6 24 14 32 28l20 45 14 44c4 8 4 12 12 12 11 0 17-1 22 7l8 20c4 12 3 22 11 24 6 0 10-1 14-3" fill="none" stroke="#575757" stroke-width="8" stroke-linecap="round" stroke-linejoin="round"/>

          <!-- Place names -->
          <g font-family="Roboto, sans-serif" font-size="12" font-weight="400" fill="#222" stroke="#dadada" stroke-width="2" paint-order="stroke">
            <text x="6" y="24">Shiloh West</text><text x="78" y="18">Kennesaw</text>
            <text x="242" y="33">Sandy Plains</text><text x="362" y="12">Westfield</text>
            <text x="660" y="12" font-size="13">Johns Creek</text><text x="441" y="19" font-size="14">Roswell</text>
            <g text-anchor="middle"><text x="158" y="60">Kennesaw</text><text x="158" y="71">Mountain</text><text x="158" y="82">National</text><text x="158" y="93">Battlefield…</text></g>
            <text x="13" y="107">West Hampton</text><text x="169" y="122" font-size="15">Marietta</text>
            <text x="69" y="149">Arbor Forest</text><text x="181" y="174">Fair Oaks</text>
            <text x="32" y="209">Country Lake*</text><text x="227" y="221">Smyrna</text>
            <text x="345" y="76">East Cobb</text><text x="500" y="130">woody</text><text x="405" y="154" font-size="13">Sandy Springs</text>
            <text x="638" y="91">Peachtree</text><text x="644" y="102">Corners</text><text x="652" y="138">Norcross</text>
            <text x="554" y="200">Doraville</text><text x="586" y="225">Embry Hills</text>
            <text x="300" y="249">Vinings</text><text x="470" y="249">Brookhaven</text><text x="653" y="264">Tucker</text>
            <text x="0" y="251">owder</text><text x="0" y="262">rings</text><text x="15" y="277">Wesley Station</text>
            <text x="32" y="298">Clarkdale</text><text x="127" y="316">Mableton</text><text x="60" y="325">Austell</text><text x="5" y="352">Lithia Springs</text>
            <g text-anchor="middle"><text x="86" y="402">Sweetwater</text><text x="86" y="413">Creek</text><text x="86" y="423">State Park</text>
            <text x="534" y="313">North</text><text x="534" y="324">Druid Hills</text></g>
            <text x="475" y="372">Druid Hills</text><text x="536" y="379" font-size="13">Decatur</text><text x="580" y="358">Scottdale</text>
            <text x="722" y="327">Stone</text><text x="712" y="337">Mounta</text><text x="736" y="427">Red</text>
            <text x="547" y="451">Candler-McAfee</text><text x="560" y="478">Panthersville</text>
            <text x="399" y="419" font-size="17" font-weight="500" fill="#111">Atlanta</text>
            <g font-size="9" font-weight="500" fill="#5c5c5c" stroke-width="1" letter-spacing="1">
              <text x="290" y="201">CUMBERLAND</text><text x="442" y="260">NORTH</text><text x="433" y="269">BUCKHEAD</text><text x="375" y="288">BUCKHEAD</text><text x="411" y="362">MIDTOWN</text><text x="411" y="371">ATLANTA</text>
            </g>
          </g>

          <use href="#i-pin" x="215" y="56" width="41" height="60" fill="url(#gRed)"/>
          <use href="#i-pin" x="368" y="140" width="41" height="62" fill="#000"/>
          <use href="#i-pin" x="470" y="92" width="41" height="62" fill="#4b00ff"/>
          <use href="#i-pin" x="441" y="338" width="41" height="61" fill="url(#gGreen)"/>
        </svg>
        <div class="views d-flex">
          <button type="button" class="on">Route</button>
          <button type="button">Pick-Up</button>
          <button type="button">Drop-Off</button>
        </div>
      </div>
      <div class="side d-flex flex-column">
        <button type="button" class="send">MESSAGE DRIVERS</button>
        <button type="button" class="d-flex align-items-center"><svg><use href="#i-compass"/></svg>MONITOR</button>
        <button type="button" class="d-flex align-items-center"><svg><use href="#i-edit"/></svg>EDIT JOB</button>
        <button type="button" class="d-flex align-items-center"><svg><use href="#i-image"/></svg>LIVE MAP</button>
        <button type="button" class="d-flex align-items-center"><svg><use href="#i-task"/></svg>TICKETS (9)</button>
      </div>
    </div>

    <div class="sect d-flex justify-content-between align-items-center">
      <h1>JOB DETAILS</h1>
      <button type="button" aria-label="Collapse job details"><svg viewBox="0 0 32 20"><path d="M3 17L16 4l13 13" fill="none" stroke="#494d50" stroke-width="5"/></svg></button>
    </div>
    <div class="panel">
      <h2>GENERAL INFO</h2>
      <div class="info d-flex">
        <svg viewBox="0 0 24 24"><path d="M12 7V3H2v18h20V7H12zM6 19H4v-2h2v2zm0-4H4v-2h2v2zm0-4H4V9h2v2zm0-4H4V5h2v2zm4 12H8v-2h2v2zm0-4H8v-2h2v2zm0-4H8V9h2v2zm0-4H8V5h2v2zm10 12h-8v-2h2v-2h-2v-2h2v-2h-2V9h8v10zm-2-8h-2v2h2v-2zm0 4h-2v2h2v-2z"/></svg>
        <div><h3>Customer</h3><p>Epic Construction &amp; Demolition Corp</p></div>
      </div>
      <div class="info tight d-flex">
        <svg viewBox="0 0 24 24"><path d="M14.400 6L14 4H5v17h2v-7h5.600l.4 2h7V6z"/></svg>
        <div><h3>External Reference</h3><p>13497</p></div>
      </div>
      <div class="info notes d-flex">
        <svg viewBox="0 0 24 24"><path d="M19 3h-4.180C14.400 1.840 13.300 1 12 1c-1.300 0-2.400.84-2.820 2H5c-1.100 0-2 .9-2 2v14c0 1.100.9 2 2 2h14c1.100 0 2-.9 2-2V5c0-1.100-.9-2-2-2zm-7 0c.55 0 1 .45 1 1s-.45 1-1 1-1-.45-1-1 .45-1 1-1zm2 14H7v-2h7v2zm3-4H7v-2h10v2zm0-4H7V7h10v2z"/></svg>
        <div><h3>Job Notes</h3><p>These are sample job notes that have been created to show how free-text content would be displayed on the Job Record. This text would be entered by the job creator creating / dispatching a job.</p></div>
      </div>
      <h2>PURCHASE ORDER</h2>
      <div class="po">
        <div class="po-top">
          <div class="d-flex justify-content-between"><span>#3678</span><span class="unit"><span class="money">$4.50</span> / TON</span></div>
          <div class="po-name d-flex justify-content-between"><span>#89 Stone</span><span>170 / 1000 TONS</span></div>
          <div class="bar" role="progressbar" aria-valuenow="170" aria-valuemin="0" aria-valuemax="1000" aria-label="Tons delivered"><div style="width:29.300%"></div><div class="done" style="width:22.200%"></div></div>
        </div>
        <div class="po-dates">10/15/19 - 12/01/19</div>
      </div>
    </div>
  </main>
</div>
<script src="https://cdn.jsdelivr.net/npm/bootstrap@5.3.0/dist/js/bootstrap.bundle.min.js"></script>
</body>
</html>
